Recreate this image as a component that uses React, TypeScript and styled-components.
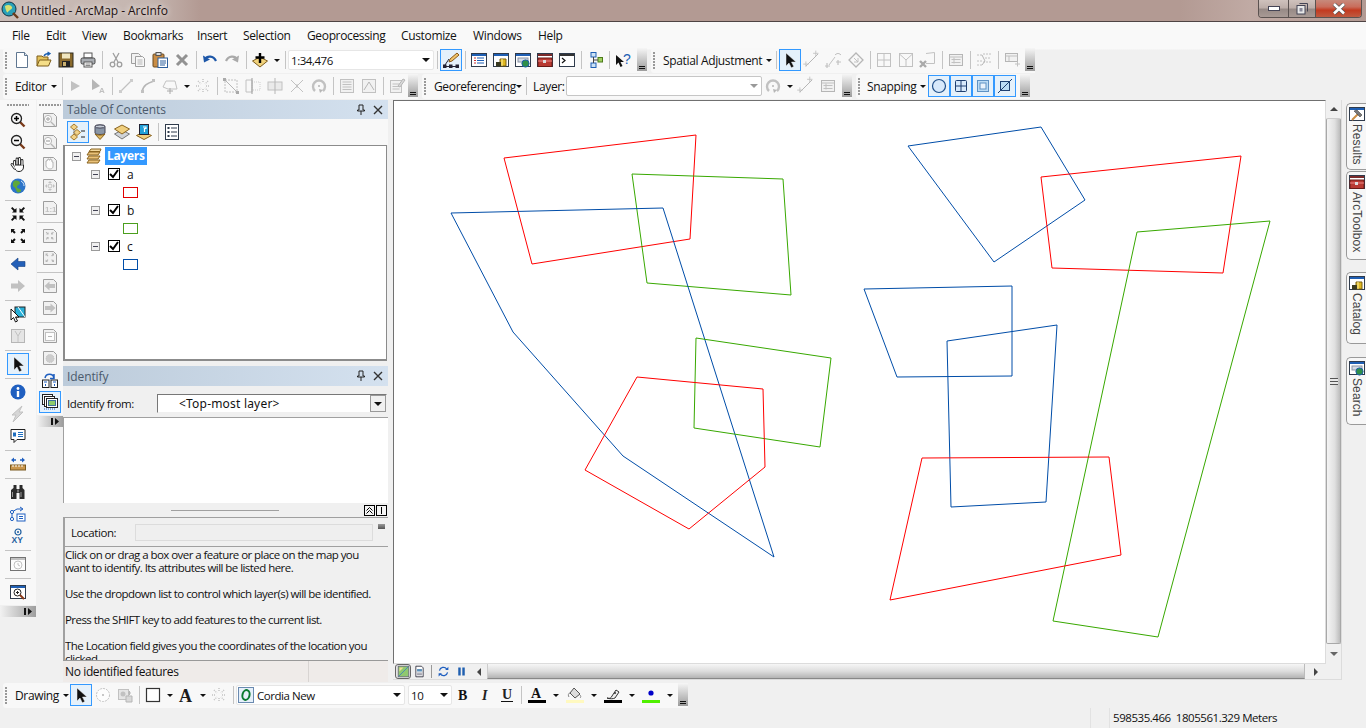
import React from 'react';
import styled, { createGlobalStyle } from 'styled-components';

const UI_FONT = '"Open Sans", "Noto Sans", "Liberation Sans", sans-serif';

const GlobalStyle = createGlobalStyle`
  html, body { margin: 0; padding: 0; background: #f0f0f0; }
  body { font-family: ${UI_FONT}; font-size: 12px; color: #111; }
  * { box-sizing: border-box; }
`;

const Win = ({ bar = '#1f5fb4', children }: { bar?: string; children?: React.ReactNode }) => (
  <>
    <rect x="0.5" y="1.5" width="15" height="13" fill="#fff" stroke="#2f3b4c" />
    <rect x="1" y="2" width="14" height="2" fill={bar} />
    {children}
  </>
);

const Doc = ({ children }: { children?: React.ReactNode }) => (
  <>
    <path d="M1.5 1.5h10l3 3v10h-13z" fill="#eee" stroke="#777" />
    {children}
  </>
);

const glass = (
  <>
    <path d="M10 10l4.5 4.5" stroke="#7a3a1a" strokeWidth="2.4" />
    <circle cx="6.5" cy="6.5" r="5" fill="#f4f4f4" stroke="#222" strokeWidth="1.3" />
  </>
);

const corners = 'M1 1h4l-1.3 1.3 2 2-1.4 1.4-2-2L1 5zM15 1v4l-1.3-1.3-2 2-1.4-1.4 2-2L11 1zM1 15v-4l1.3 1.3 2-2 1.4 1.4-2 2L5 15zM15 15h-4l1.3-1.3-2-2 1.4-1.4 2 2L15 11z';
const inward = 'M6 6H2l1.3-1.3-2-2 1.4-1.4 2 2L6 2zM10 6V2l1.3 1.3 2-2 1.4 1.4-2 2L14 6zM6 10v4l-1.3-1.3-2 2-1.4-1.4 2-2L2 10zM10 10h4l-1.3 1.3 2 2-1.4 1.4-2-2L10 14z';
const fingers = 'M4.5 9V5.5M7 8V3M9.5 8V2.5M12 9V4.5M2 8.5l2.5 3.5';

const icons: Record<string, React.ReactNode> = {
  newdoc: <><path d="M2.5.5h8l3 3v12h-11z" fill="#fff" stroke="#5f7690" /><path d="M10.5.5v3h3" fill="#dfe6ee" stroke="#5f7690" /></>,
  open: <><path d="M1 14V4h5l1 1h5v3" fill="#e4c35c" stroke="#7c5d1a" /><path d="M1 14l2.5-6H15l-2.5 6z" fill="#f5de88" stroke="#7c5d1a" /><path d="M8 4c1-2 3-2.5 5-2.5M11.5 0L14 1.5 11.5 3.5" stroke="#1b5fb0" fill="none" strokeWidth="1.3" /></>,
  save: <><rect x="1" y="1" width="14" height="14" fill="#8a6a2c" stroke="#2d2a20" /><rect x="4" y="1.5" width="8" height="5" fill="#f0e6c0" /><rect x="4" y="9" width="8" height="6" fill="#222" /><rect x="5" y="10" width="3" height="4" fill="#c9b070" /></>,
  print: <><rect x="4" y="1" width="8" height="5" fill="#fff" stroke="#555" /><rect x="1" y="6" width="14" height="6" rx="1.5" fill="#a9adb2" stroke="#444" /><rect x="4" y="10" width="8" height="5" fill="#fff" stroke="#555" /><path d="M5.5 12h5M5.5 13.5h5" stroke="#888" /></>,
  cut: <><path d="M5 1l5 9M11 1L6 10" stroke="#777" strokeWidth="1.3" fill="none" /><circle cx="4.5" cy="12.5" r="2.3" fill="none" stroke="#777" strokeWidth="1.3" /><circle cx="11.5" cy="12.5" r="2.3" fill="none" stroke="#777" strokeWidth="1.3" /></>,
  copy: <><path d="M1.5 1.5h7l2 2v8h-9z" fill="#eee" stroke="#777" /><path d="M5.5 4.5h7l2 2v8h-9z" fill="#f6f6f6" stroke="#777" /><path d="M7.5 8h5M7.5 10h5M7.5 12h5" stroke="#999" /></>,
  paste: <><rect x="1" y="2" width="11" height="13" rx="1" fill="#c98d45" stroke="#6b4a20" /><rect x="4" y="0.5" width="5" height="3" fill="#ddd" stroke="#555" /><rect x="6" y="6" width="9.5" height="9.5" fill="#fff" stroke="#2c5e9c" /><path d="M8 9h6M8 11h6M8 13h5" stroke="#2c5e9c" /></>,
  del: <path d="M3 3l10 10M13 3L3 13" stroke="#666" strokeWidth="3" />,
  undo: <><path d="M3 7.5C5 3.5 11.5 3.5 14 9" fill="none" stroke="#1d57a8" strokeWidth="2.2" /><path d="M1 3.5l1 7 6-3z" fill="#1d57a8" /></>,
  redo: <><path d="M13 7.5C11 3.5 4.5 3.5 2 9" fill="none" stroke="#888" strokeWidth="2.2" /><path d="M15 3.5l-1 7-6-3z" fill="#888" /></>,
  add: <><path d="M8 5l7.5 4L8 15 .5 9z" fill="#f0d27c" stroke="#7d5c1e" /><path d="M8 1v10M3.5 5.5h9" stroke="#000" strokeWidth="2.4" /></>,
  editor: <><path d="M1 14.5h14" stroke="#223" /><rect x="0" y="12.5" width="3.5" height="3.5" fill="#223" /><rect x="6" y="12.5" width="3.5" height="3.5" fill="#223" /><rect x="12.5" y="12.5" width="3.5" height="3.5" fill="#223" /><path d="M2 13l4-6" stroke="#223" /><path d="M6 10l1-3 7-6 2 2-7 6z" fill="#f0c36a" stroke="#8a5a1a" /></>,
  toc: <Win><path d="M3 6h2M3 8.5h2M3 11h2" stroke="#c33" /><path d="M6 6h7M6 8.5h7M6 11h7" stroke="#1f5fb4" /></Win>,
  catalog: <Win><path d="M7 7h6v7H7z" fill="#e0b820" stroke="#7a6010" /><path d="M3 10h5v4.5H3z" fill="#3a3a20" /><path d="M9 7v7" stroke="#fff2a0" /></Win>,
  search: <Win><rect x="3" y="6" width="10" height="4" fill="#d5dbe5" stroke="#8a94a5" /><circle cx="10.5" cy="11.5" r="3.6" fill="#2f8f4a" stroke="#1d5fa8" /></Win>,
  toolbox: <Win bar="#7b2b2b"><path d="M1 6h14v8.5H1z" fill="#b83a32" stroke="#6a1a16" /><path d="M1 9h14" stroke="#e88" /><rect x="6" y="8" width="3" height="3" fill="#ddd" /></Win>,
  python: <Win bar="#333"><path d="M3 6l3 2.5L3 11" stroke="#111" fill="none" strokeWidth="1.2" /></Win>,
  model: <><rect x="4" y="0.5" width="5" height="4.5" fill="#cde3f6" stroke="#1f5fb4" /><rect x="4" y="11" width="5" height="4.5" fill="#cde3f6" stroke="#1f5fb4" /><rect x="11" y="5.5" width="4.5" height="4.5" fill="#9fd060" stroke="#4c7a1a" /><path d="M6.5 5v6M6.5 8H11" stroke="#444" /></>,
  help: <><path d="M1 3l0 10 2.5-2.5L5.5 15l2-1-2-4H9z" fill="#111" /><text x="8" y="12" fontSize="14" fontFamily="Liberation Sans" fill="#1f5fb4">?</text></>,
  arrow: <path d="M4 1v13l3-3 2.3 4.8 2.5-1.2L9.5 10H14z" fill="#111" stroke="#eee" strokeWidth=".5" />,
  linkA: <><path d="M2 14L14 2" stroke="#999" /><path d="M1 11v6M-2 14h6M12 5V-1M9 2h6" stroke="#aaa" transform="translate(1 -.5) scale(.9)" /></>,
  linkB: <><path d="M3 13L9 5" stroke="#aaa" /><path d="M9 3c2-2 4-2 6 0M1 11v5M12 8v5" stroke="#999" fill="none" /><path d="M-1 14h5M10 10h5" stroke="#aaa" /></>,
  rubber: <><path d="M8 1l7 7-7 7-7-7z" fill="none" stroke="#999" strokeWidth="1.3" /><path d="M6 6l4 4M10 6v4H6" fill="none" stroke="#aaa" /></>,
  grid: <><rect x="1.5" y="1.5" width="13" height="13" fill="none" stroke="#aaa" /><path d="M8 1.5v13M1.5 8h13" stroke="#aaa" /></>,
  env: <><rect x="1.5" y="1.5" width="13" height="13" fill="none" stroke="#aaa" /><path d="M1.5 2L8 8l6.5-6M8 8v6.5" fill="none" stroke="#aaa" /></>,
  envx: <><path d="M6 1.5l8.5-1v11H6" fill="none" stroke="#aaa" /><path d="M0 9l6 6M6 9l-6 6" stroke="#888" strokeWidth="2.4" /></>,
  tbl: <><rect x="1.5" y="2.5" width="13" height="11" fill="#eee" stroke="#999" /><path d="M1.5 5h13M3.5 7.5h9M3.5 10.5h9M6 5.5v6" stroke="#aaa" /></>,
  attr: <><path d="M1 3h5M1 9h5M1 13h5M7 2h8M9 6h6M7 10h8" stroke="#aaa" strokeDasharray="2 1" /><path d="M6 3l3 6-3 4" stroke="#999" fill="none" /></>,
  table2: <><rect x="1.5" y="1.5" width="12" height="8" fill="#eee" stroke="#999" /><path d="M1.5 4h12M5 4v5" stroke="#aaa" /><path d="M11 12h5M13.5 9.5v5" stroke="#aaa" /></>,
  editArrow: <path d="M3 3v10l9-5z" fill="#aaa" />,
  editA: <><path d="M2 1v11l8-4z" fill="#999" /><text x="9" y="15" fontSize="8" fontFamily="Liberation Sans" fontWeight="bold" fill="#aaa">A</text></>,
  seg: <><path d="M2 14L14 2" stroke="#aaa" strokeWidth="1.2" /><rect x="1" y="12" width="3" height="3" fill="#bbb" /><rect x="12" y="1" width="3" height="3" fill="#bbb" /></>,
  curve: <><path d="M2 14C3 7 8 5 14 3" stroke="#999" strokeWidth="1.6" fill="none" /><rect x="1" y="12" width="3" height="3" fill="#aaa" /><rect x="12" y="1" width="3" height="3" fill="#aaa" /></>,
  poly: <><path d="M4 3h9l2 8H6l-5-2z" fill="none" stroke="#aaa" /><path d="M5 13h6M8 10v6" stroke="#888" /></>,
  star: <path d="M8 1v4M8 11v4M1 8h4M11 8h4M3 3l3 3M13 3l-3 3M3 13l3-3M13 13l-3-3" stroke="#aaa" strokeDasharray="1 1" strokeWidth="1.4" />,
  split: <><path d="M2 2h12L14 14H2z" fill="none" stroke="#aaa" strokeDasharray="2 1" /><path d="M2 2l12 12" stroke="#999" /><rect x="0" y="0" width="3" height="3" fill="#888" /><rect x="13" y="13" width="3" height="3" fill="#888" /></>,
  cutp: <><path d="M1 2h6v12H1z" fill="none" stroke="#aaa" /><path d="M7 4h8v8H7z" fill="none" stroke="#bbb" strokeDasharray="1 1" /><path d="M7 0v16" stroke="#777" /></>,
  merge: <><rect x="1" y="4" width="14" height="8" fill="#e4e4e4" stroke="#aaa" /><path d="M8 0v16" stroke="#999" /></>,
  cross: <path d="M2 2l12 12M14 2L2 14M8 6v4" stroke="#aaa" />,
  rotate: <><path d="M4 13A6 6 0 1 1 12 13" fill="none" stroke="#aaa" strokeWidth="2.4" /><path d="M8 11l1 4 3-3z" fill="#999" /><circle cx="8" cy="8" r="1" fill="#999" /></>,
  list: <><rect x="1.5" y="1.5" width="13" height="13" fill="#eee" stroke="#aaa" /><path d="M3.5 4h9M3.5 6.5h9M3.5 9h9M3.5 11.5h9" stroke="#aaa" /></>,
  vert: <><rect x="1.5" y="1.5" width="13" height="13" fill="#eee" stroke="#aaa" /><path d="M3 12l5-8 5 8" fill="none" stroke="#999" /></>,
  task: <><rect x="1.5" y="2.5" width="11" height="12" fill="#eee" stroke="#aaa" /><path d="M3.5 6h7M3.5 8.5h7M3.5 11h7" stroke="#aaa" /><path d="M9 8l5-7 2 1-5 7z" fill="#ccc" stroke="#999" /></>,
  circle: <circle cx="8" cy="8" r="6.5" fill="#d7e9fb" stroke="#1f4f8a" strokeWidth="1.2" />,
  snapGrid: <><rect x="2.5" y="2.5" width="11" height="11" rx="1" fill="#d7e9fb" stroke="#1f3f70" /><path d="M8 2.5v11M2.5 8h11" stroke="#1f3f70" /></>,
  snapBox: <><rect x="2.5" y="2.5" width="11" height="11" fill="#bcdcf5" stroke="#5e92c4" /><rect x="5" y="5" width="6" height="6" fill="#e9f3fc" stroke="#5e92c4" /></>,
  snapEdge: <><rect x="3.5" y="3.5" width="9" height="9" fill="#bcdcf5" stroke="#1f3f70" /><path d="M1 15L15 1" stroke="#1f3f70" /></>,
  zoomIn: <>{glass}<path d="M4 6.5h5M6.5 4v5" stroke="#000" strokeWidth="1.5" /></>,
  zoomOut: <>{glass}<path d="M4 6.5h5" stroke="#000" strokeWidth="1.5" /></>,
  hand: <><path d={fingers} stroke="#222" strokeWidth="2.8" strokeLinecap="round" fill="none" /><path d="M3.5 9h10v2c0 3-2 4.5-4.5 4.5-2 0-3-1-4-2.5z" fill="#fff" stroke="#222" /><path d={fingers} stroke="#fff" strokeWidth="1.2" strokeLinecap="round" fill="none" /></>,
  globe: <><circle cx="8" cy="8" r="7.5" fill="#2d74c9" /><path d="M4 3c3-1 6 0 6 2s-3 2-3 4 3 1 4 3-3 3-4 2-1-4-3-5-1-5 0-6z" fill="#5fa83a" /><path d="M11 3c2 1 3 3 3 5" stroke="#d8e8f8" fill="none" /></>,
  fixIn: <path d="M6.5 6.5H2l1.6-1.6L1 2.3 2.3 1l2.6 2.6L6.5 2zM9.5 6.5V2l1.6 1.6L13.7 1 15 2.3l-2.6 2.6L14 6.5zM6.5 9.5V14l-1.6-1.6L2.3 15 1 13.7l2.6-2.6L2 9.5zM9.5 9.5H14l-1.6 1.6L15 13.7 13.7 15l-2.6-2.6L9.5 14z" fill="#111" />,
  fixOut: <path d={corners} fill="#111" />,
  back: <path d="M1 8l7-6v3.5h7v5H8V14z" fill="#2460b8" stroke="#163f80" strokeWidth=".6" />,
  fwd: <path d="M15 8L8 2v3.5H1v5h7V14z" fill="#aaa" />,
  selFeat: <><rect x="5" y="1" width="10" height="10" fill="#28b0d8" stroke="#222" /><path d="M8 1l7 10" stroke="#fff" /><path d="M1 3v11l2.5-2.5L5.5 16l2-1-2-4H9z" fill="#fff" stroke="#111" /></>,
  clearSel: <><rect x="1.5" y="1.5" width="13" height="13" fill="#ddd" stroke="#999" /><path d="M5 3l3 5 3-5M8 8v6" stroke="#aaa" fill="none" /></>,
  info: <><circle cx="8" cy="8" r="7.5" fill="#1f5fc0" /><circle cx="8" cy="4.5" r="1.4" fill="#fff" /><path d="M8 7v6" stroke="#fff" strokeWidth="2.4" /></>,
  bolt: <path d="M12 0L2 9h4l-3 7 10-10H9z" fill="#c8c8c8" stroke="#aaa" />,
  tip: <><path d="M1 1.5h14v10H7l-3 3v-3H1z" fill="#fff" stroke="#222" /><path d="M3 4.5h3v4H3z" fill="#1f6fc0" /><path d="M8 4.5h5M8 6.5h5M8 8.5h5" stroke="#1f6fc0" /></>,
  measure: <><rect x="0.5" y="9" width="15" height="5" fill="#c9964d" stroke="#7a5a20" /><path d="M3 9v2M6 9v2M9 9v2M12 9v2" stroke="#fff" /><path d="M1 4l3-2.5v5zM15 4l-3-2.5v5z" fill="#1f5fc0" /><path d="M4 4h2M10 4h2" stroke="#1f5fc0" strokeWidth="1.4" /></>,
  binoc: <><path d="M3.5 1h3v4h3V1h3v3l2 2v9h-5V9h-3v6H1V6l2.5-2z" fill="#2c2c2c" /><path d="M2.5 8v5M11 8v5" stroke="#999" /><rect x="7" y="5.5" width="2" height="3" fill="#777" /></>,
  route: <><rect x="7" y="8" width="8" height="7" fill="#fff" stroke="#1f5fc0" /><path d="M9 10.5h4M9 12.5h4" stroke="#1f5fc0" /><path d="M2 14V6l5-3h5M10 1l3 2-3 2" fill="none" stroke="#1f5fc0" /><circle cx="2" cy="6" r="1.6" fill="#fff" stroke="#1f5fc0" /><circle cx="2" cy="13" r="1.6" fill="#fff" stroke="#1f5fc0" /></>,
  xy: <><circle cx="8" cy="4" r="3" fill="none" stroke="#1f5fa0" strokeWidth="1.2" /><circle cx="8" cy="4" r="1" fill="#1f5fa0" /><text x="1.5" y="15" fontSize="8.5" fontWeight="bold" fontFamily="Liberation Sans" fill="#1f5fa0">XY</text></>,
  clock: <><Win bar="#aaa" /><circle cx="8" cy="9" r="4" fill="none" stroke="#aaa" /><path d="M8 7v2l2 1" stroke="#aaa" fill="none" /></>,
  zoomWin: <Win><circle cx="7.5" cy="8.5" r="3.5" fill="#fff" stroke="#222" /><path d="M6 8.5h3M7.5 7v3" stroke="#222" /><path d="M10 11l4 4" stroke="#8a3a1a" strokeWidth="2" /></Win>,
  docIn: <Doc><circle cx="6" cy="7" r="3.6" fill="#fff" stroke="#999" /><path d="M4 7h4M6 5v4M9 10l4 4" stroke="#999" strokeWidth="1.3" /></Doc>,
  docOut: <Doc><circle cx="6" cy="7" r="3.6" fill="#fff" stroke="#999" /><path d="M4 7h4M9 10l4 4" stroke="#999" strokeWidth="1.3" /></Doc>,
  docHand: <Doc><path d="M4 8V5h1v-1h1v-1h1v1h1v-1h1v1h1v2h1v4c0 2-1 3-3 3s-3-1-4-3z" fill="#fff" stroke="#999" /></Doc>,
  docFull: <Doc><path d="M8 3l2 2H6zM8 13l2-2H6zM3 8l2-2v4zM13 8l-2-2v4z" fill="#aaa" /><circle cx="8" cy="8" r="2" fill="none" stroke="#aaa" /></Doc>,
  doc11: <Doc><text x="3" y="11.5" fontSize="8" fontWeight="bold" fontFamily="Liberation Sans" fill="#aaa">1:1</text></Doc>,
  docIn2: <Doc><g transform="translate(3 3) scale(.6)"><path d={inward} fill="#999" /></g></Doc>,
  docOut2: <Doc><g transform="translate(3 3) scale(.6)"><path d={corners} fill="#999" /></g></Doc>,
  docBack: <Doc><path d="M2.5 8l5-4.5V6H13v4H7.5v2.5z" fill="#aaa" /></Doc>,
  docFwd: <Doc><path d="M13.5 8l-5-4.5V6H3v4h5.5v2.5z" fill="#aaa" /></Doc>,
  docMinus: <Doc><rect x="3.5" y="4.5" width="9" height="8" fill="#fff" stroke="#aaa" /><path d="M6 8.5h4" stroke="#999" /></Doc>,
  docDots: <Doc><circle cx="8" cy="8.5" r="4" fill="#bbb" stroke="#aaa" strokeDasharray="1 1" /></Doc>,
  switchDoc: <><rect x="0.5" y="8" width="6.5" height="7.5" fill="#fff" stroke="#222" /><rect x="9" y="8" width="6.5" height="7.5" fill="#fff" stroke="#222" /><path d="M2 10h3M11 10h3M3.5 12v2M12.5 12v2" stroke="#1f5fc0" /><path d="M3 6c1-5 8-5 9 0M12 2v4.5H8" fill="none" stroke="#1f5fc0" strokeWidth="1.5" /></>,
  layoutPages: <><rect x="0.5" y="0.5" width="10" height="10" fill="#fff" stroke="#222" /><rect x="2.5" y="2.5" width="10" height="10" fill="#fff" stroke="#222" /><rect x="4.5" y="4.5" width="11" height="9" fill="#fff" stroke="#222" /><rect x="6.5" y="6.5" width="7" height="5" fill="#8ecb6a" stroke="#3c6f9c" /><path d="M2 15h12" stroke="#1f5fc0" strokeDasharray="1 1" /></>,
  byOrder: <><path d="M4 0l3.5 3L4 6 .5 3z" fill="#f1d288" stroke="#a87c2c" /><path d="M7 5.5l3.5 3L7 11.5 3.5 8.5z" fill="#f1d288" stroke="#a87c2c" /><path d="M4 10l3.5 3L4 16 .5 13z" fill="#f1d288" stroke="#a87c2c" /><path d="M11 7h4M11 13h4" stroke="#222" /><path d="M4 6v4" stroke="#888" /></>,
  bySource: <><path d="M3 2.5C3 .5 13 .5 13 2.5V9c0 2-10 2-10 0z" fill="#8a96a6" stroke="#445" /><ellipse cx="8" cy="2.5" rx="5" ry="1.6" fill="#c5ccd6" stroke="#445" /><path d="M3 10l5 5.5 5-5.5c-2 1.5-8 1.5-10 0z" fill="#e0b860" stroke="#8a6420" /></>,
  byVis: <><path d="M8 6l7.5 4L8 15 .5 10z" fill="#cfd3d8" stroke="#777" /><path d="M8 1l7.5 4L8 10 .5 5z" fill="#f0cf7e" stroke="#8a6420" /></>,
  bySel: <><path d="M8 8l7.5 3.5L8 15.5.5 11.5z" fill="#f0cf7e" stroke="#8a6420" /><rect x="3.5" y="0.5" width="9" height="10" fill="#20a0d8" stroke="#223" /><path d="M7 3h3v1.5H8.5V8" fill="none" stroke="#fff" strokeWidth="1.2" /></>,
  options: <><rect x="1.5" y="0.5" width="13" height="15" fill="#fff" stroke="#2f3b4c" /><path d="M7 4h6M7 8h6M7 12h6" stroke="#2f3b4c" /><rect x="3.5" y="3" width="2" height="2" fill="#2f3b4c" /><rect x="3.5" y="7" width="2" height="2" fill="#2f3b4c" /><rect x="3.5" y="11" width="2" height="2" fill="#2f3b4c" /></>,
  layers: <><path d="M3 12h11l-2 3H1z" fill="#eac27a" stroke="#8a6420" /><path d="M3 8h11l-2 3H1z" fill="#eac27a" stroke="#8a6420" /><path d="M3 4h11l-2 3H1z" fill="#eac27a" stroke="#8a6420" /><path d="M5 1h10l-1 2.5H3z" fill="#f2d79c" stroke="#8a6420" /></>,
  circleSel: <><circle cx="8" cy="8" r="6.5" fill="#fff" stroke="#aaa" strokeDasharray="2 1" /><circle cx="8" cy="8" r="1" fill="#999" /></>,
  imgTool: <><rect x="1.5" y="2.5" width="10" height="10" fill="#ddd" stroke="#aaa" /><circle cx="6" cy="7" r="2.5" fill="#aaa" /><path d="M9 9h6v6H9z" fill="#ccc" stroke="#999" /><path d="M11 6h3M12.5 4v4" stroke="#999" /></>,
  rect: <rect x="1.5" y="1.5" width="13" height="13" fill="#fff" stroke="#333" strokeWidth="1.2" />,
  textA: <text x="1" y="15" fontSize="18" fontWeight="bold" fontFamily="Liberation Serif" fill="#1b1b1b">A</text>,
  curveText: <><path d="M1 14l3-9 8-3 3 10z" fill="none" stroke="#bbb" strokeWidth="1.4" strokeDasharray="3 1" /></>,
  bold: <text x="3" y="13" fontSize="14" fontWeight="bold" fontFamily="Liberation Serif" fill="#111">B</text>,
  italic: <text x="5" y="13" fontSize="14" fontStyle="italic" fontWeight="bold" fontFamily="Liberation Serif" fill="#222">I</text>,
  under: <><text x="3" y="12" fontSize="14" fontWeight="bold" fontFamily="Liberation Serif" fill="#222">U</text><path d="M2 14.5h12" stroke="#111" /></>,
  fontColor: <><text x="2" y="11" fontSize="14" fontWeight="bold" fontFamily="Liberation Serif" fill="#111">A</text><rect x="-1" y="13" width="18" height="3" fill="#000" /></>,
  fillColor: <><path d="M7 1l6 6-5 4-5-5z" fill="#ddd" stroke="#555" /><path d="M3 6c-2 0-2 3-1 4M13 8c1 1 1 2 0 3" stroke="#888" fill="none" /><rect x="-1" y="13" width="18" height="3" fill="#fff9c0" /></>,
  penColor: <><path d="M2 11c3 1 4 0 5-2l4-6 3 2-4 6c-2 1-5 1-8 0z" fill="#eee" stroke="#333" /><circle cx="10" cy="6" r="1" fill="#333" /><rect x="-1" y="13" width="18" height="3" fill="#000" /></>,
  markerColor: <><circle cx="8" cy="6" r="2.6" fill="#0000c8" /><rect x="-1" y="13" width="18" height="3" fill="#50f000" /></>,
  dataView: <><rect x="1.5" y="1.5" width="13" height="13" fill="#8fc870" stroke="#667" /><path d="M2 14L14 2" stroke="#3a7fc0" /><path d="M3 3h5L3 8z" fill="#f0e090" /></>,
  layoutView: <><path d="M3.5 1.5h7l2 2v11h-9z" fill="#fff" stroke="#223" /><rect x="5" y="5" width="6" height="3" fill="#5a8fb8" /><path d="M5 10h6M5 12h6" stroke="#667" /></>,
  refresh: <><path d="M3 7a5 5 0 0 1 9-2M13 9a5 5 0 0 1-9 2" fill="none" stroke="#1f5fc0" strokeWidth="1.5" /><path d="M10 6h4V2zM6 10H2v4z" fill="#1f5fc0" /></>,
  pause: <path d="M4 3h3v10H4zM9 3h3v10H9z" fill="#1f5fb0" />,
  fontIcon: <><rect x="0.5" y="0.5" width="15" height="15" fill="#e6f0fa" stroke="#6a8ab0" /><ellipse cx="8" cy="8" rx="3.5" ry="5" fill="none" stroke="#0a7a30" strokeWidth="2" transform="rotate(15 8 8)" /></>,
  hammer: <Win><path d="M3 14l7-7" stroke="#c98d45" strokeWidth="2" /><path d="M5 5l3-1 5 5-2 2z" fill="#777" stroke="#333" strokeWidth=".5" /></Win>
};

const Svg = styled.svg<{ $off?: boolean }>`
  display: block;
  overflow: visible;
  flex: none;
  ${(p) => (p.$off ? 'filter: grayscale(1) opacity(0.7);' : '')}
`;

const Icon = ({ name, size = 16, off }: { name: string; size?: number; off?: boolean }) => (
  <Svg width={size} height={size} viewBox="0 0 16 16" $off={off}>
    {icons[name]}
  </Svg>
);

const Page = styled.div`
  width: 1366px;
  height: 728px;
  display: flex;
  flex-direction: column;
  overflow: hidden;
  background: #f0f0f0;
`;

const TitleBar = styled.div`
  height: 22px;
  flex: none;
  display: flex;
  align-items: flex-start;
  background: linear-gradient(90deg, #c9bbb6 0, #c5b6b0 150px, #b39a93 200px, #b39a93 1180px, #c0aaa4 1250px, #b39a93 1366px);
  border-bottom: 1px solid #4f4444;
`;

const AppLogo = styled.div`
  width: 18px;
  height: 18px;
  margin: 1px 1px 0 1px;
`;

const TitleText = styled.div`
  margin: 2px 0 0 1px;
  font-size: 12px;
  line-height: 17px;
  letter-spacing: -0.05px;
  color: #211;
  text-shadow: 0 0 6px #fff;
  flex: 1;
`;

const WinButtons = styled.div`
  display: flex;
  height: 18px;
  margin-right: 4px;
  border: 1px solid #5b5250;
  border-top: 0;
  border-radius: 0 0 4px 4px;
  overflow: hidden;
`;

const WinButton = styled.div<{ $w: number; $close?: boolean }>`
  width: ${(p) => p.$w}px;
  display: flex;
  align-items: center;
  justify-content: center;
  border-left: 1px solid #5b5250;
  background: ${(p) => (p.$close
    ? 'linear-gradient(#c78a7c 0, #c96d5c 40%, #c33a20 60%, #bf5a40 100%)'
    : 'linear-gradient(#cfc2bd 0, #bdaea9 45%, #978a86 55%, #a89a95 100%)')};
  &:first-child { border-left: 0; }
`;

const MenuBar = styled.div`
  height: 26px;
  flex: none;
  display: flex;
  align-items: center;
  padding-left: 12px;
  background: #f9f9f9;
`;

const MenuItem = styled.div<{ $w: number }>`
  width: ${(p) => p.$w}px;
  font-size: 12px;
  letter-spacing: -0.35px;
  color: #111;
`;

const ToolRow = styled.div`
  height: 26px;
  flex: none;
  display: flex;
  align-items: flex-start;
  gap: 4px;
  padding-left: 3px;
  background: #f0f0f0;
`;

const ToolRowTop = styled(ToolRow)`
  background: linear-gradient(#f9f9f9 0, #f9f9f9 1px, #f0f0f0 2px);
`;

const Toolbar = styled.div`
  height: 25px;
  display: flex;
  align-items: center;
  padding-bottom: 1px;
  background: #f8f8f8;
  border-radius: 3px 0 0 3px;
`;

const Grip = styled.div`
  width: 8px;
  height: 17px;
  flex: none;
  background: radial-gradient(circle at 1px 1px, #999 0, #999 1px, transparent 1px) 2px 0 / 3px 3px repeat-y;
`;

const Tool = styled.div<{ $w?: number; $active?: boolean }>`
  width: ${(p) => p.$w ?? 22}px;
  height: 22px;
  flex: none;
  display: flex;
  align-items: center;
  justify-content: center;
  border: 1px solid ${(p) => (p.$active ? '#3399ff' : 'transparent')};
  background: ${(p) => (p.$active ? '#e5f1fb' : 'transparent')};
`;

const Sep = styled.div`
  width: 1px;
  height: 18px;
  flex: none;
  margin: 0 2.5px;
  background: #c4c4c4;
`;

const Gap = styled.div<{ $w: number }>`
  width: ${(p) => p.$w}px;
  flex: none;
`;

const Caret = styled.div<{ $w?: number }>`
  width: ${(p) => p.$w ?? 11}px;
  height: 8px;
  flex: none;
  display: flex;
  align-items: center;
  justify-content: center;
  &::after {
    content: '';
    border-left: 3px solid transparent;
    border-right: 3px solid transparent;
    border-top: 3px solid #111;
  }
`;

const Label = styled.div<{ $w: number; $pad?: number }>`
  width: ${(p) => p.$w}px;
  padding-left: ${(p) => p.$pad ?? 4}px;
  flex: none;
  font-size: 12px;
  letter-spacing: -0.35px;
  white-space: nowrap;
  color: #111;
`;

const Overflow = styled.div<{ $ml?: number }>`
  width: 10px;
  height: 23px;
  margin-left: ${(p) => p.$ml ?? 0}px;
  flex: none;
  align-self: flex-start;
  position: relative;
  background: linear-gradient(#f6f6f6, #9c9c9c);
  &::after {
    content: '';
    position: absolute;
    left: 2px;
    bottom: 4px;
    width: 6px;
    height: 1px;
    background: #111;
    box-shadow: 0 2px 0 0 #111;
  }
`;

const Combo = styled.div<{ $w: number; $pad?: number; $off?: boolean; $ml?: number }>`
  width: ${(p) => p.$w}px;
  height: 20px;
  margin-left: ${(p) => p.$ml ?? 0}px;
  flex: none;
  display: flex;
  align-items: center;
  gap: 3px;
  padding: 0 3px 0 ${(p) => p.$pad ?? 2}px;
  background: #fff;
  border: 1px solid ${(p) => (p.$off ? '#c6c6c6' : '#e6e6e6')};
  border-radius: 2px;
  font-size: 11.5px;
  letter-spacing: -0.45px;
  color: #111;
`;

const ComboText = styled.div`
  flex: 1;
  white-space: nowrap;
`;

const ComboArrow = styled.div<{ $off?: boolean }>`
  border-left: 4px solid transparent;
  border-right: 4px solid transparent;
  border-top: 4px solid ${(p) => (p.$off ? '#999' : '#111')};
`;

// item code: "|" separator, "v" caret, "V" wide caret, "_" 2px gap, "!x" pressed, "~x" greyed out
const Tools = ({ items, vertical }: { items: string[]; vertical?: boolean }) => (
  <>
    {items.map((it, i) => {
      if (it === '|') return vertical ? <VSep key={i} /> : <Sep key={i} />;
      if (it === 'v') return <Caret key={i} />;
      if (it === 'V') return <Caret key={i} $w={16} />;
      if (it === '_') return <Gap key={i} $w={2} />;
      const active = it[0] === '!';
      const off = it[0] === '~';
      const name = active || off ? it.slice(1) : it;
      return (
        <Tool key={i} $active={active}>
          <Icon name={name} off={off} />
        </Tool>
      );
    })}
  </>
);

const Main = styled.div`
  height: 583px;
  flex: none;
  display: flex;
`;

const LeftDock = styled.div`
  width: 63px;
  flex: none;
  display: flex;
  align-items: flex-start;
`;

const DockBar = styled.div<{ $w: number; $mr: number }>`
  width: ${(p) => p.$w}px;
  margin-right: ${(p) => p.$mr}px;
  display: flex;
  flex-direction: column;
  align-items: flex-end;
`;

const DockTools = styled.div`
  width: 100%;
  display: flex;
  flex-direction: column;
  align-items: center;
  background: #f8f8f8;
  padding-bottom: 2px;
`;

const DockGrip = styled.div`
  width: 22px;
  height: 9px;
  flex: none;
  background: radial-gradient(circle at 1px 1px, #999 0, #999 1px, transparent 1px) 0 4px / 3px 3px repeat-x;
`;

const VSep = styled.div`
  width: 26px;
  height: 1px;
  flex: none;
  margin: 2.5px 0;
  background: #c4c4c4;
`;

const DockHandle = styled.div`
  width: 100%;
  height: 11px;
  margin-top: 1px;
  display: flex;
  align-items: center;
  justify-content: flex-end;
  padding-right: 3px;
  background: linear-gradient(90deg, #f2f2f2, #9e9e9e);
`;

const Panels = styled.div`
  width: 325px;
  flex: none;
  display: flex;
  flex-direction: column;
  margin-right: 5px;
`;

const PanelTitle = styled.div<{ $h: number }>`
  height: ${(p) => p.$h}px;
  flex: none;
  display: flex;
  align-items: center;
  padding: 0 5px 0 4px;
  background: linear-gradient(90deg, #bccbda, #d4e1ef);
  font-size: 12px;
  letter-spacing: -0.1px;
  color: #4b5a6c;
`;

const PanelTitleText = styled.div`
  flex: 1;
`;

const PanelGlyphs = styled.div`
  display: flex;
  gap: 7px;
  align-items: center;
`;

const TocBar = styled.div`
  height: 26px;
  flex: none;
  display: flex;
  align-items: center;
  padding: 0 0 1px 4px;
  background: #f8f8f8;
`;

const Tree = styled.div`
  height: 216px;
  flex: none;
  width: 324px;
  margin-bottom: 5px;
  padding: 1px 0 0 7px;
  background: #fff;
  border: 1px solid #8b8b8b;
  border-bottom-width: 2px;
  border-left-width: 2px;
`;

const TreeRow = styled.div<{ $indent: number }>`
  height: 18px;
  display: flex;
  align-items: center;
  padding-left: ${(p) => p.$indent}px;
`;

const Expander = styled.div<{ $mr?: number }>`
  width: 9px;
  height: 9px;
  margin-right: ${(p) => p.$mr ?? 0}px;
  flex: none;
  display: flex;
  align-items: center;
  justify-content: center;
  border: 1px solid #9a9a9a;
  background: #f0f0f0;
  &::after {
    content: '';
    width: 5px;
    height: 1px;
    background: #445;
  }
`;

const RootLabel = styled.div`
  margin-left: 3px;
  padding: 0 2px;
  height: 18px;
  line-height: 18px;
  background: #3399ff;
  color: #fff;
  font-weight: 700;
  font-size: 12px;
  letter-spacing: -0.3px;
`;

const CheckBox = styled.div`
  width: 12px;
  height: 12px;
  flex: none;
  margin-left: 8px;
  border: 1px solid #000;
  background: #fff;
  display: flex;
  align-items: center;
  justify-content: center;
`;

const LayerName = styled.div`
  margin-left: 7px;
  font-size: 12px;
`;

const Swatch = styled.div<{ $color: string }>`
  width: 15px;
  height: 11px;
  margin-left: 48px;
  background: #fff;
  border: 1px solid ${(p) => p.$color};
`;

const IdentifyRow = styled.div`
  height: 31px;
  flex: none;
  display: flex;
  align-items: center;
  padding: 4px 1px 0 4px;
`;

const IdentifyLabel = styled.div`
  width: 90px;
  font-size: 11.5px;
  letter-spacing: -0.4px;
`;

const IdentifyCombo = styled.div`
  flex: 1;
  height: 19px;
  display: flex;
  align-items: center;
  justify-content: space-between;
  padding-left: 21px;
  background: #fff;
  border: 1px solid #f0f0f0;
  border-top: 1px solid #777;
  border-left: 1px solid #777;
  font-family: "Noto Sans", sans-serif;
  font-size: 12px;
  letter-spacing: 0.2px;
`;

const IdentifyDrop = styled.div`
  width: 16px;
  height: 17px;
  display: flex;
  align-items: center;
  justify-content: center;
  background: #f0f0f0;
  border: 1px solid #999;
`;

const IdentifyList = styled.div`
  height: 86px;
  flex: none;
  background: #fff;
  border-top: 1px solid #a0a0a0;
  border-left: 1px solid #a0a0a0;
`;

const Splitter = styled.div`
  height: 14px;
  flex: none;
  display: flex;
  align-items: center;
  padding: 0 1px 0 108px;
`;

const SplitLine = styled.div`
  width: 108px;
  height: 1px;
  background: #a0a0a0;
  margin-right: 84px;
`;

const MiniButton = styled.div`
  width: 11px;
  height: 11px;
  margin-left: 1px;
  border: 1px solid #000;
  background: #f4f4f4;
  display: flex;
  align-items: center;
  justify-content: center;
`;

const Details = styled.div`
  height: 143px;
  flex: none;
  display: flex;
  flex-direction: column;
  border-top: 1px solid #a0a0a0;
  border-left: 2px solid #a0a0a0;
`;

const LocationRow = styled.div`
  height: 29px;
  flex: none;
  display: flex;
  align-items: center;
  padding-left: 6px;
  border-bottom: 1px solid #a0a0a0;
`;

const LocationLabel = styled.div`
  width: 64px;
  font-size: 11.5px;
  letter-spacing: -0.4px;
`;

const LocationInput = styled.div`
  width: 238px;
  height: 17px;
  border: 1px solid #dcdcdc;
  background: #efefef;
`;

const LocationGlyph = styled.div`
  width: 7px;
  height: 5px;
  margin: -12px 0 0 5px;
  background: linear-gradient(#999, #555);
`;

const HelpText = styled.div`
  flex: 1;
  overflow: hidden;
  padding-top: 1px;
  font-size: 11.5px;
  line-height: 13px;
  letter-spacing: -0.55px;
  color: #111;
  white-space: pre;
`;

const NoFeatures = styled.div`
  height: 22px;
  flex: none;
  display: flex;
  align-items: center;
  padding-left: 2px;
  background: linear-gradient(90deg, #efebe9 0, #efebe9 245px, #d8d4d2 245px, #d8d4d2 246px, #efebe9 246px);
  border-top: 1px solid #999;
  font-size: 12px;
  letter-spacing: -0.38px;
`;

const MapArea = styled.div`
  width: 949px;
  height: 580px;
  flex: none;
  display: flex;
  flex-direction: column;
  border-right: 1px solid #dcdcdc;
  border-bottom: 1px solid #dcdcdc;
`;

const MapTop = styled.div`
  height: 564px;
  flex: none;
  display: flex;
`;

const Canvas = styled.div`
  flex: 1;
  background: #fff;
  border-top: 1px solid #707070;
  border-left: 1px solid #707070;
  border-bottom: 1px solid #dcdcdc;
  border-right: 1px solid #dcdcdc;
`;

const MapSvg = styled.svg`
  display: block;
  width: 100%;
  height: 100%;
`;

const VScroll = styled.div`
  width: 15px;
  flex: none;
  display: flex;
  flex-direction: column;
  background: #f0f0f0;
`;

const ScrollEnd = styled.div<{ $h: number }>`
  height: ${(p) => p.$h}px;
  flex: none;
  display: flex;
  align-items: center;
  justify-content: center;
`;

const ArrowUp = styled.div`
  border-left: 4px solid transparent;
  border-right: 4px solid transparent;
  border-bottom: 4px solid #444;
`;

const ArrowDown = styled.div`
  border-left: 4px solid transparent;
  border-right: 4px solid transparent;
  border-top: 4px solid #666;
`;

const ArrowLeft = styled.div`
  border-top: 4px solid transparent;
  border-bottom: 4px solid transparent;
  border-right: 4px solid #444;
`;

const ArrowRight = styled.div`
  border-top: 4px solid transparent;
  border-bottom: 4px solid transparent;
  border-left: 4px solid #444;
`;

const VThumb = styled.div`
  flex: 1;
  display: flex;
  align-items: center;
  justify-content: center;
  border: 1px solid #a8a8a8;
  border-top-color: #ccc;
  border-radius: 2px;
  background: linear-gradient(90deg, #f4f4f4, #e0e0e0 60%, #bcbcbc);
`;

const ThumbGrip = styled.div`
  width: 8px;
  height: 7px;
  background: repeating-linear-gradient(#555 0, #555 1px, #e8e8e8 1px, #e8e8e8 3px);
`;

const HBar = styled.div`
  height: 15px;
  flex: none;
  display: flex;
  align-items: center;
  background: #f0f0f0;
`;

const ViewBtn = styled.div<{ $active?: boolean }>`
  width: ${(p) => (p.$active ? 16 : 14)}px;
  height: 15px;
  flex: none;
  margin-left: ${(p) => (p.$active ? 2 : 1)}px;
  display: flex;
  align-items: center;
  justify-content: center;
  border: 1px solid ${(p) => (p.$active ? '#666' : 'transparent')};
  border-radius: 3px;
  background: ${(p) => (p.$active ? '#e4e4e4' : 'transparent')};
`;

const HSep = styled.div`
  width: 1px;
  height: 13px;
  flex: none;
  margin: 0 2px 0 5px;
  background: #999;
`;

const HBtn = styled.div`
  width: 18px;
  flex: none;
  display: flex;
  justify-content: center;
`;

const HEnd = styled.div<{ $w: number }>`
  width: ${(p) => p.$w}px;
  height: 15px;
  flex: none;
  display: flex;
  align-items: center;
  justify-content: center;
`;

const HThumb = styled.div`
  flex: 1;
  height: 15px;
  border-left: 1px solid #ccc;
  border-right: 1px solid #bbb;
  border-bottom: 1px solid #888;
  background: linear-gradient(#f6f6f6, #dedede 50%, #b4b4b4);
`;

const Tabs = styled.div`
  flex: 1;
  margin-left: 4px;
  display: flex;
  flex-direction: column;
  align-items: flex-start;
`;

const SideTab = styled.div<{ $h: number; $mt: number }>`
  width: 24px;
  height: ${(p) => p.$h}px;
  margin-top: ${(p) => p.$mt}px;
  flex: none;
  display: flex;
  flex-direction: column;
  align-items: flex-start;
  padding: 2px 0 0 2px;
  gap: 2px;
  background: #f7f7f7;
  border: 1px solid #9a9a9a;
  border-right: 0;
  border-radius: 5px 0 0 5px;
`;

const SideText = styled.div`
  writing-mode: vertical-rl;
  font-family: "Liberation Sans", sans-serif;
  font-size: 12px;
  letter-spacing: 0.1px;
  color: #444;
  white-space: nowrap;
  margin-left: 1px;
`;

const BottomRow = styled.div`
  height: 25px;
  flex: none;
  display: flex;
  padding-left: 3px;
  background: #f0f0f0;
`;

const StatusBar = styled.div`
  flex: 1;
  display: flex;
  align-items: center;
  justify-content: flex-end;
  background: #f0f0f0;
`;

const StatusCell = styled.div<{ $w: number }>`
  width: ${(p) => p.$w}px;
  height: 20px;
  line-height: 20px;
  padding-left: 3px;
  border-left: 1px solid #e2e2e2;
  font-size: 11.5px;
  letter-spacing: -0.45px;
  white-space: nowrap;
  color: #111;
`;

const menus: [string, number][] = [
  ['File', 34], ['Edit', 36], ['View', 41], ['Bookmarks', 74], ['Insert', 46],
  ['Selection', 64], ['Geoprocessing', 94], ['Customize', 72], ['Windows', 65], ['Help', 40]
];

const layers: [string, string][] = [['a', '#e00000'], ['b', '#4c9f1e'], ['c', '#004da8']];

const shapes: [string, string][] = [
  ['#ff0000', '504,158 696,135 690,239 532,264'],
  ['#38a800', '632,174 783,179 791,295 647,283'],
  ['#004da8', '451,213 663,208 774,557 623,456 513,332'],
  ['#38a800', '696,338 831,358 820,447 694,428'],
  ['#ff0000', '637,377 763,389 765,467 689,529 585,470'],
  ['#004da8', '908,146 1041,127 1085,200 994,262'],
  ['#ff0000', '1041,177 1241,156 1223,273 1052,268'],
  ['#38a800', '1137,232 1270,221 1158,637 1053,621'],
  ['#004da8', '864,289 1012,286 1012,376 897,377'],
  ['#004da8', '947,341 1057,325 1046,502 951,507'],
  ['#ff0000', '922,458 1109,457 1121,555 890,600']
];

const helpText = `Click on or drag a box over a feature or place on the map you
want to identify. Its attributes will be listed here.

Use the dropdown list to control which layer(s) will be identified.

Press the SHIFT key to add features to the current list.

The Location field gives you the coordinates of the location you
clicked.`;

const PinGlyph = () => (
  <svg width="10" height="12" viewBox="0 0 10 12">
    <path d="M3 1h4v5h1.5v1h-7V6H3zM5 7v4" fill="none" stroke="#222" />
  </svg>
);

const CloseGlyph = () => (
  <svg width="10" height="10" viewBox="0 0 10 10">
    <path d="M1 1l8 8M9 1L1 9" stroke="#333" strokeWidth="1.4" />
  </svg>
);

const HandleGlyph = () => (
  <svg width="9" height="7" viewBox="0 0 9 7">
    <path d="M0 0h2v7H0zM4 0l4 3.5L4 7z" fill="#111" />
  </svg>
);

const App = () => (
  <Page>
    <GlobalStyle />
    <TitleBar>
      <AppLogo>
        <svg width="18" height="18" viewBox="0 0 18 18">
          <circle cx="8" cy="8" r="7" fill="#2aa0b8" stroke="#134" />
          <path d="M4 5c3-2 6-1 7 1s-3 3-4 5-3-4-3-6z" fill="#d8e070" />
          <path d="M12 12l5 5" stroke="#6a3a1a" strokeWidth="2.4" />
        </svg>
      </AppLogo>
      <TitleText>Untitled - ArcMap - ArcInfo</TitleText>
      <WinButtons>
        <WinButton $w={29}>
          <svg width="12" height="6" viewBox="0 0 12 6"><rect x="0.5" y="0.5" width="11" height="4" fill="#fff" stroke="#445" /></svg>
        </WinButton>
        <WinButton $w={27}>
          <svg width="12" height="12" viewBox="0 0 12 12"><path d="M3.5.5h8v8" fill="none" stroke="#445" /><rect x="1" y="2.5" width="8" height="8.5" fill="#e8e8e8" stroke="#445" /><rect x="3.5" y="5" width="3" height="3.5" fill="#889" /></svg>
        </WinButton>
        <WinButton $w={46} $close>
          <svg width="14" height="12" viewBox="0 0 14 12"><path d="M2 1l10 9.5M12 1L2 10.5" stroke="#555" strokeWidth="4" /><path d="M2 1l10 9.5M12 1L2 10.5" stroke="#fff" strokeWidth="2.6" /></svg>
        </WinButton>
      </WinButtons>
    </TitleBar>

    <MenuBar>
      {menus.map(([name, w]) => (
        <MenuItem key={name} $w={w}>{name}</MenuItem>
      ))}
    </MenuBar>

    <ToolRowTop>
      <Toolbar>
        <Grip />
        <Tools items={['newdoc', 'open', 'save', 'print', '|', '~cut', '~copy', 'paste', '~del', '|', 'undo', '~redo', '|', 'add', 'v', '|']} />
        <Combo $w={146}><ComboText>1:34,476</ComboText><ComboArrow /></Combo>
        <Sep />
        <Tools items={['!editor', '|', 'toc', 'catalog', 'search', 'toolbox', 'python', '|', 'model', '|', 'help']} />
        <Overflow $ml={3} />
      </Toolbar>
      <Toolbar>
        <Grip />
        <Label $w={106}>Spatial Adjustment</Label>
        <Caret $w={8} />
        <Sep />
        <Tools items={['!arrow', '~linkA', '~linkB', '~rubber', '|', '~grid', '~env', '~envx', '|', '~tbl', '|', '~attr', '|', '~table2']} />
        <Overflow $ml={2} />
      </Toolbar>
    </ToolRowTop>

    <ToolRow>
      <Toolbar>
        <Grip />
        <Label $w={37}>Editor</Label>
        <Caret />
        <Sep />
        <Tools items={['~editArrow', '~editA', '|', '~seg', '~curve', '~poly', 'v', '~star', '|', '~split', '~cutp', '~merge', '~cross', '~rotate', '|', '~list', '~vert', '|', '~task']} />
        <Overflow />
      </Toolbar>
      <Toolbar>
        <Grip />
        <Label $w={84}>Georeferencing</Label>
        <Caret $w={9} />
        <Sep />
        <Label $w={37}>Layer:</Label>
        <Combo $w={196} $off><ComboText /><ComboArrow $off /></Combo>
        <Tools items={['~rotate', 'v', '~linkA', '~tbl']} />
        <Overflow $ml={3} />
      </Toolbar>
      <Toolbar>
        <Grip />
        <Label $w={53} $pad={3}>Snapping</Label>
        <Caret />
        <Tools items={['!circle', '!snapGrid', '!snapBox', '!snapEdge']} />
        <Overflow $ml={4} />
      </Toolbar>
    </ToolRow>

    <Main>
      <LeftDock>
        <DockBar $w={36} $mr={1}>
          <DockTools>
            <DockGrip />
            <Tools vertical items={['zoomIn', 'zoomOut', 'hand', 'globe', '|', 'fixIn', 'fixOut', '|', 'back', '~fwd', '|', 'selFeat', '~clearSel', '|', '!arrow', '|', 'info', '~bolt', 'tip', '|', 'measure', '|', 'binoc', 'route', 'xy', '|', '~clock', '|', 'zoomWin']} />
          </DockTools>
          <DockHandle><HandleGlyph /></DockHandle>
        </DockBar>
        <DockBar $w={26} $mr={0}>
          <DockTools>
            <DockGrip />
            <Tools vertical items={['~docIn', '~docOut', '~docHand', '~docFull', '~doc11', '|', '~docIn2', '~docOut2', '|', '~docBack', '~docFwd', '|', '~docMinus', '~docDots', 'switchDoc', '!layoutPages']} />
          </DockTools>
          <DockHandle><HandleGlyph /></DockHandle>
        </DockBar>
      </LeftDock>

      <Panels>
        <PanelTitle $h={19}>
          <PanelTitleText>Table Of Contents</PanelTitleText>
          <PanelGlyphs><PinGlyph /><CloseGlyph /></PanelGlyphs>
        </PanelTitle>
        <TocBar>
          <Tools items={['!byOrder', 'bySource', 'byVis', 'bySel', '|', 'options']} />
        </TocBar>
        <Tree>
          <TreeRow $indent={0}>
            <Expander $mr={5} />
            <Icon name="layers" />
            <RootLabel>Layers</RootLabel>
          </TreeRow>
          {layers.map(([name, color]) => (
            <React.Fragment key={name}>
              <TreeRow $indent={19}>
                <Expander />
                <CheckBox>
                  <svg width="10" height="10" viewBox="0 0 10 10"><path d="M1 5l3 3 5-7" fill="none" stroke="#000" strokeWidth="2" /></svg>
                </CheckBox>
                <LayerName>{name}</LayerName>
              </TreeRow>
              <TreeRow $indent={3}>
                <Swatch $color={color} />
              </TreeRow>
            </React.Fragment>
          ))}
        </Tree>

        <PanelTitle $h={20}>
          <PanelTitleText>Identify</PanelTitleText>
          <PanelGlyphs><PinGlyph /><CloseGlyph /></PanelGlyphs>
        </PanelTitle>
        <IdentifyRow>
          <IdentifyLabel>Identify from:</IdentifyLabel>
          <IdentifyCombo>
            {'<Top-most layer>'}
            <IdentifyDrop><ComboArrow /></IdentifyDrop>
          </IdentifyCombo>
        </IdentifyRow>
        <IdentifyList />
        <Splitter>
          <SplitLine />
          <MiniButton>
            <svg width="7" height="7" viewBox="0 0 7 7"><path d="M.5 3.5l3-3 3 3M.5 6.5l3-3 3 3" fill="none" stroke="#000" /></svg>
          </MiniButton>
          <MiniButton>
            <svg width="3" height="7" viewBox="0 0 3 7"><path d="M1.5 0v7" stroke="#000" /></svg>
          </MiniButton>
        </Splitter>
        <Details>
          <LocationRow>
            <LocationLabel>Location:</LocationLabel>
            <LocationInput />
            <LocationGlyph />
          </LocationRow>
          <HelpText>{helpText}</HelpText>
        </Details>
        <NoFeatures>No identified features</NoFeatures>
      </Panels>

      <MapArea>
        <MapTop>
          <Canvas>
            <MapSvg viewBox="394 101 931 562">
              {shapes.map(([color, points]) => (
                <polygon key={points} points={points} fill="none" stroke={color} strokeWidth="1" />
              ))}
            </MapSvg>
          </Canvas>
          <VScroll>
            <ScrollEnd $h={18}><ArrowUp /></ScrollEnd>
            <VThumb><ThumbGrip /></VThumb>
            <ScrollEnd $h={20}><ArrowDown /></ScrollEnd>
          </VScroll>
        </MapTop>
        <HBar>
          <ViewBtn $active><Icon name="dataView" size={13} /></ViewBtn>
          <ViewBtn><Icon name="layoutView" size={13} /></ViewBtn>
          <HSep />
          <HBtn><Icon name="refresh" size={13} /></HBtn>
          <HBtn><Icon name="pause" size={13} /></HBtn>
          <HEnd $w={17}><ArrowLeft /></HEnd>
          <HThumb />
          <HEnd $w={21}><ArrowRight /></HEnd>
          <HEnd $w={15} />
        </HBar>
      </MapArea>

      <Tabs>
        <SideTab $h={67} $mt={3}>
          <Icon name="hammer" />
          <SideText>Results</SideText>
        </SideTab>
        <SideTab $h={89} $mt={1}>
          <Icon name="toolbox" />
          <SideText>ArcToolbox</SideText>
        </SideTab>
        <SideTab $h={72} $mt={12}>
          <Icon name="catalog" />
          <SideText>Catalog</SideText>
        </SideTab>
        <SideTab $h={68} $mt={13}>
          <Icon name="search" />
          <SideText>Search</SideText>
        </SideTab>
      </Tabs>
    </Main>

    <BottomRow>
      <Toolbar>
        <Grip />
        <Label $w={50}>Drawing</Label>
        <Caret $w={9} />
        <Tools items={['!arrow', '~circleSel', '~imgTool', '|', 'rect', 'v', 'textA', 'v', '~star', '|']} />
        <Combo $w={169} $pad={1}>
          <Icon name="fontIcon" />
          <ComboText>Cordia New</ComboText>
          <ComboArrow />
        </Combo>
        <Combo $w={44} $ml={3}><ComboText>10</ComboText><ComboArrow /></Combo>
        <Tools items={['bold', 'italic', 'under', '|', '_', 'fontColor', 'V', 'fillColor', 'V', 'penColor', 'V', 'markerColor', 'V']} />
        <Overflow />
      </Toolbar>
    </BottomRow>

    <StatusBar>
      <StatusCell $w={19} />
      <StatusCell $w={257}>598535.466&nbsp; 1805561.329 Meters</StatusCell>
    </StatusBar>
  </Page>
);

export default App;
